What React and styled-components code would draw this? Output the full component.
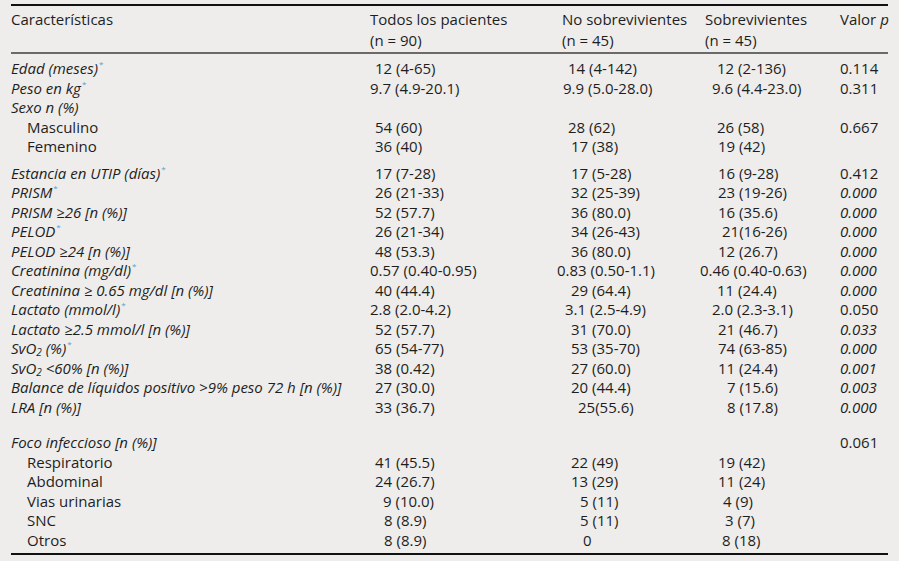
import styled, { createGlobalStyle } from 'styled-components';

const GlobalStyle = createGlobalStyle`
  html, body {
    margin: 0;
    padding: 0;
    background: #eeedeb;
  }
  body {
    width: 899px;
    height: 561px;
    overflow: hidden;
    font-family: "Open Sans", "Liberation Sans", sans-serif;
    color: #1e1e1e;
  }
`;

const COLS = '359px 192px 143px 135px 48px';

const Table = styled.div`
  width: 877px;
  margin: 4px 0 0 11px;
  border-top: 2px solid #111;
  border-bottom: 2px solid #111;
  font-size: 15px;
`;

const Head = styled.div`
  display: grid;
  grid-template-columns: ${COLS};
  padding: 3px 0 1px;
  line-height: 21px;
  border-bottom: 2px solid #6a6a6a;
`;

const HeadCell = styled.div`
  white-space: nowrap;
`;

const Body = styled.div`
  padding: 5px 0 3px;
`;

const Row = styled.div`
  display: grid;
  grid-template-columns: ${COLS};
  height: 19.5px;
  line-height: 19.5px;
  white-space: nowrap;
`;

const Spacer = styled.div`
  height: ${(p) => p.$h}px;
`;

const Label = styled.div`
  font-style: ${(p) => (p.$italic ? 'italic' : 'normal')};
  padding-left: ${(p) => (p.$sub ? 16 : 0)}px;

  sub {
    font-size: 10px;
    line-height: 0;
    vertical-align: -2px;
  }
`;

const Cell = styled.div`
  font-style: ${(p) => (p.$italic ? 'italic' : 'normal')};
  padding-left: ${(p) => Math.max(p.$indent || 0, 0)}px;
  margin-left: ${(p) => Math.min(p.$indent || 0, 0)}px;
`;

const Ast = styled.sup`
  font-size: 8px;
  line-height: 0;
  vertical-align: 7px;
  color: #4aa3d4;
  font-style: normal;
  margin-left: 1px;
`;

const rows = [
  { label: <>Edad (meses)<Ast>*</Ast></>, it: true, c: [[5, '12 (4-65)'], [6, '14 (4-142)'], [12, '12 (2-136)']], p: '0.114' },
  { label: <>Peso en kg<Ast>*</Ast></>, it: true, c: [[0, '9.7 (4.9-20.1)'], [1, '9.9 (5.0-28.0)'], [7, '9.6 (4.4-23.0)']], p: '0.311' },
  { label: 'Sexo n (%)', it: true, c: [] },
  { label: 'Masculino', sub: true, c: [[5, '54 (60)'], [6, '28 (62)'], [12, '26 (58)']], p: '0.667' },
  { label: 'Femenino', sub: true, c: [[5, '36 (40)'], [9, '17 (38)'], [13, '19 (42)']] },
  { gap: 7 },
  { label: <>Estancia en UTIP (días)<Ast>*</Ast></>, it: true, c: [[5, '17 (7-28)'], [9, '17 (5-28)'], [13, '16 (9-28)']], p: '0.412' },
  { label: <>PRISM<Ast>*</Ast></>, it: true, c: [[5, '26 (21-33)'], [9, '32 (25-39)'], [13, '23 (19-26)']], p: '0.000', pi: true },
  { label: 'PRISM ≥26 [n (%)]', it: true, c: [[5, '52 (57.7)'], [9, '36 (80.0)'], [13, '16 (35.6)']], p: '0.000', pi: true },
  { label: <>PELOD<Ast>*</Ast></>, it: true, c: [[5, '26 (21-34)'], [9, '34 (26-43)'], [17, '21(16-26)']], p: '0.000', pi: true },
  { label: 'PELOD ≥24 [n (%)]', it: true, c: [[5, '48 (53.3)'], [9, '36 (80.0)'], [13, '12 (26.7)']], p: '0.000', pi: true },
  { label: <>Creatinina (mg/dl)<Ast>*</Ast></>, it: true, c: [[0, '0.57 (0.40-0.95)'], [-5, '0.83 (0.50-1.1)'], [-5, '0.46 (0.40-0.63)']], p: '0.000', pi: true },
  { label: 'Creatinina ≥ 0.65 mg/dl [n (%)]', it: true, c: [[5, '40 (44.4)'], [9, '29 (64.4)'], [12, '11 (24.4)']], p: '0.000', pi: true },
  { label: <>Lactato (mmol/l)<Ast>*</Ast></>, it: true, c: [[0, '2.8 (2.0-4.2)'], [3, '3.1 (2.5-4.9)'], [7, '2.0 (2.3-3.1)']], p: '0.050' },
  { label: 'Lactato ≥2.5 mmol/l [n (%)]', it: true, c: [[5, '52 (57.7)'], [9, '31 (70.0)'], [13, '21 (46.7)']], p: '0.033', pi: true },
  { label: <>SvO<sub>2</sub> (%)<Ast>*</Ast></>, it: true, c: [[5, '65 (54-77)'], [9, '53 (35-70)'], [13, '74 (63-85)']], p: '0.000', pi: true },
  { label: <>SvO<sub>2</sub> &lt;60% [n (%)]</>, it: true, c: [[5, '38 (0.42)'], [9, '27 (60.0)'], [13, '11 (24.4)']], p: '0.001', pi: true },
  { label: 'Balance de líquidos positivo >9% peso 72 h [n (%)]', it: true, c: [[5, '27 (30.0)'], [9, '20 (44.4)'], [22, '7 (15.6)']], p: '0.003', pi: true },
  { label: 'LRA [n (%)]', it: true, c: [[5, '33 (36.7)'], [16, '25(55.6)'], [22, '8 (17.8)']], p: '0.000', pi: true },
  { gap: 16 },
  { label: 'Foco infeccioso [n (%)]', it: true, c: [], p: '0.061' },
  { label: 'Respiratorio', sub: true, c: [[5, '41 (45.5)'], [9, '22 (49)'], [13, '19 (42)']] },
  { label: 'Abdominal', sub: true, c: [[5, '24 (26.7)'], [9, '13 (29)'], [13, '11 (24)']] },
  { label: 'Vias urinarias', sub: true, c: [[13, '9 (10.0)'], [18, '5 (11)'], [18, '4 (9)']] },
  { label: 'SNC', sub: true, c: [[14, '8 (8.9)'], [18, '5 (11)'], [20, '3 (7)']] },
  { label: 'Otros', sub: true, c: [[14, '8 (8.9)'], [21, '0'], [17, '8 (18)']] },
];

export default function App() {
  return (
    <>
      <GlobalStyle />
      <Table>
        <Head>
          <HeadCell>Características</HeadCell>
          <HeadCell>Todos los pacientes<br />(n = 90)</HeadCell>
          <HeadCell>No sobrevivientes<br />(n = 45)</HeadCell>
          <HeadCell>Sobrevivientes<br />(n = 45)</HeadCell>
          <HeadCell>Valor <i>p</i></HeadCell>
        </Head>
        <Body>
          {rows.map((r, i) =>
            r.gap ? (
              <Spacer key={i} $h={r.gap} />
            ) : (
              <Row key={i}>
                <Label $italic={r.it} $sub={r.sub}>{r.label}</Label>
                {[0, 1, 2].map((k) => (
                  <Cell key={k} $indent={r.c[k] ? r.c[k][0] : 0}>
                    {r.c[k] ? r.c[k][1] : ''}
                  </Cell>
                ))}
                <Cell $italic={r.pi}>{r.p || ''}</Cell>
              </Row>
            )
          )}
        </Body>
      </Table>
    </>
  );
}
